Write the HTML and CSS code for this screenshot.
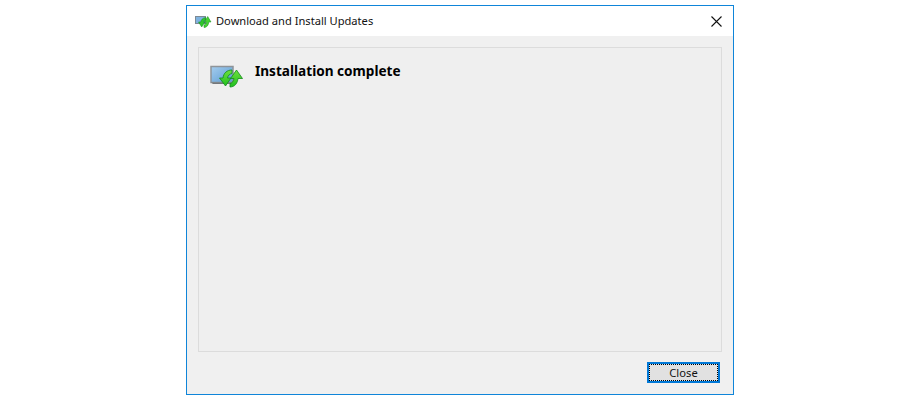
FILE: index.html
```html
<!DOCTYPE html>
<html lang="en">
<head>
<meta charset="utf-8">
<title>Download and Install Updates</title>
<link rel="stylesheet" href="styles.css">
</head>
<body>
<div class="window">
  <div class="titlebar">
    <svg class="title-icon" width="17" height="13" viewBox="0 0 17 13">
      <rect x=".5" y="1.500" width="10" height="7" fill="#7fb2df" stroke="#7d8a94"/>
      <path d="M10.500 2.500C7.500 3 6 5 5.700 7H3.500l3.200 5 3.300-5H8.300c.3-1 1-1.700 2.200-2z" fill="#2ec62a" stroke="#128a1c" stroke-width=".5"/>
      <path d="M9 12.500c3 0 4.500-2.500 4.800-5.500H16L12.700 1.500 9.400 7h2c-.2 1.500-1 2.600-2.400 3z" fill="#45d332" stroke="#128a1c" stroke-width=".5"/>
    </svg>
    <span class="title-text">Download and Install Updates</span>
    <svg class="close-x" width="11" height="11" viewBox="0 0 11 11"><path d="M.5.5l10 10M10.500.5l-10 10" stroke="#111" stroke-width="1.100" fill="none"/></svg>
  </div>
  <div class="content">
    <div class="panel">
      <svg class="big-icon" width="36" height="26" viewBox="0 0 36 26">
        <defs>
          <linearGradient id="scr" x1="0" y1="0" x2="1" y2="1"><stop offset="0" stop-color="#a5cdee"/><stop offset="1" stop-color="#5b9bd3"/></linearGradient>
          <linearGradient id="arr" x1="0" y1="0" x2="0" y2="1"><stop offset="0" stop-color="#6fe03c"/><stop offset="1" stop-color="#1fc01f"/></linearGradient>
        </defs>
        <rect x="1" y="2.500" width="22" height="16" fill="url(#scr)" stroke="#8f9499" stroke-width="1.500"/>
        <path d="M1 18.500h21v1.500H3z" fill="#73787c"/>
        <path d="M22 6C17 6 13.500 9 13 14H9.500l6 8 5.500-8h-3.500c.5-2.500 2-4 4.500-4.500z" fill="url(#arr)" stroke="#128a1c" stroke-width=".8"/>
        <path d="M20 23c5 0 7.500-4 8-8.500h4.500l-6-8.500-6 8.500H24c-.5 2.500-1.500 4.500-4 5z" fill="url(#arr)" stroke="#128a1c" stroke-width=".8"/>
      </svg>
      <h1 class="heading">Installation complete</h1>
    </div>
    <div class="footer">
      <button class="btn" type="button"><span class="btn-inner">Close</span></button>
    </div>
  </div>
</div>
</body>
</html>
```

FILE: styles.css
```css
html, body {
  margin: 0;
  height: 400px;
  background: #fff;
  overflow: hidden;
}
body {
  padding: 5px 0 0 186px;
  box-sizing: border-box;
  font-family: "Noto Sans", "Open Sans", sans-serif;
}
.window {
  width: 548px;
  height: 390px;
  box-sizing: border-box;
  border: 1px solid #0f85d9;
  display: flex;
  flex-direction: column;
  background: #fff;
}
.titlebar {
  height: 30px;
  flex: none;
  display: flex;
  align-items: center;
  padding: 0 11px 2px 8px;
  box-sizing: border-box;
  font-size: 11.13px;
  color: #111;
}
.title-icon {
  flex: none;
  margin: 2px 4px 0 0;
}
.title-text {
  flex: 1;
  font-family: "Noto Sans", sans-serif;
}
.close-x {
  flex: none;
  margin-top: 2px;
}
.content {
  flex: 1;
  background: #f0f0f0;
  padding: 11px 11px 11px 11px;
  display: flex;
  flex-direction: column;
}
.panel {
  flex: 1;
  box-sizing: border-box;
  border: 1px solid #dcdcdc;
  background: #efefef;
  display: flex;
  align-items: flex-start;
  padding: 13px 11px;
}
.big-icon {
  flex: none;
  margin: 3px 9px 0 0;
}
.heading {
  margin: 0;
  font-family: "Noto Sans", sans-serif;
  font-size: 13.6px;
  font-weight: 700;
  line-height: 20px;
  color: #000;
}
.footer {
  flex: none;
  display: flex;
  justify-content: flex-end;
  padding: 10px 2px 0 0;
}
.btn {
  width: 73px;
  height: 21px;
  box-sizing: border-box;
  border: 2px solid #0078d7;
  background: #e1e1e1;
  padding: 0;
  margin: 0;
  font-family: "Noto Sans", sans-serif;
  font-size: 11.2px;
  color: #111;
  display: flex;
}
.btn-inner {
  flex: 1;
  border: 1px dotted #000;
  display: flex;
  align-items: center;
  justify-content: center;
}
```
